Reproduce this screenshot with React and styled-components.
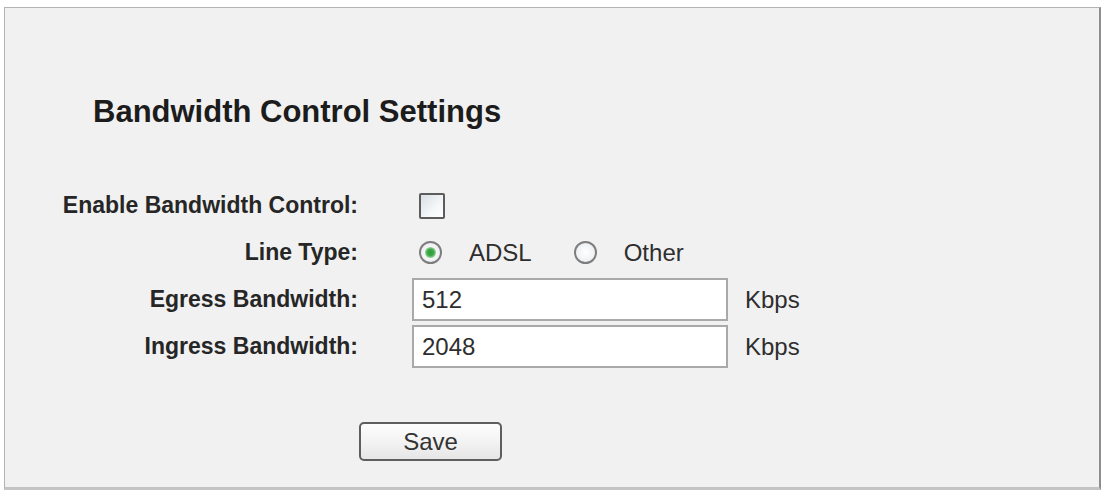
import React from "react";
import styled, { createGlobalStyle } from "styled-components";

const GlobalStyle = createGlobalStyle`
  html, body {
    margin: 0;
    padding: 0;
    background: #ffffff;
    font-family: "Liberation Sans", Arial, Helvetica, sans-serif;
  }
  * { box-sizing: border-box; }
`;

const Page = styled.div`
  padding: 7px 0 0 4px;
  height: 490px;
  overflow: hidden;
`;

const Panel = styled.div`
  width: 1097px;
  height: 483px;
  background: #f1f1f1;
  border-top: 1px solid #b3b3b3;
  border-left: 1px solid #b3b3b3;
  border-right: 2px solid #8e8e8e;
  border-bottom: 3px solid #c4c4c4;
  padding: 86px 0 0 0;
`;

const Title = styled.h1`
  margin: 0 0 0 88px;
  font-size: 31px;
  line-height: 36px;
  font-weight: bold;
  color: #1c1c1c;
`;

const Form = styled.div`
  margin-top: 52px;
  display: flex;
  flex-direction: column;
`;

const Row = styled.div`
  display: grid;
  grid-template-columns: 353px 1fr;
  column-gap: 54px;
  align-items: center;
  height: 47px;
`;

const Label = styled.div`
  text-align: right;
  font-size: 23px;
  font-weight: bold;
  color: #262626;
  white-space: nowrap;
`;

const Control = styled.div`
  display: flex;
  align-items: center;
`;

const Checkbox = styled.span`
  display: inline-block;
  width: 26px;
  height: 26px;
  margin-left: 7px;
  border: 2px solid #5c5c5c;
  border-radius: 2px;
  background: linear-gradient(135deg, #d9e0e6 0%, #f4f6f8 60%, #ffffff 100%);
`;

const Radio = styled.span`
  position: relative;
  display: inline-block;
  width: 23px;
  height: 23px;
  margin-left: ${(p) => p.$offset}px;
  border: 2px solid #7d7d7d;
  border-radius: 50%;
  background: radial-gradient(circle at 50% 50%, #ffffff 0%, #eef0f2 70%, #dcdfe2 100%);

  &::after {
    content: "";
    display: ${(p) => (p.$checked ? "block" : "none")};
    position: absolute;
    left: 50%;
    top: 50%;
    width: 11px;
    height: 11px;
    margin: -5.5px 0 0 -5.5px;
    border-radius: 50%;
    background: radial-gradient(circle, #2f9a3a 0%, #3da848 40%, #a9dcae 75%, #d8efda 100%);
  }
`;

const OptionText = styled.span`
  margin-left: 27px;
  font-size: 24px;
  color: #2e2e2e;
`;

const Input = styled.div`
  width: 316px;
  height: 43px;
  border: 2px solid #a9a9a9;
  background: #ffffff;
  padding-left: 8px;
  display: flex;
  align-items: center;
  font-size: 24px;
  color: #2e2e2e;
`;

const Unit = styled.span`
  margin-left: 17px;
  font-size: 24px;
  color: #2e2e2e;
`;

const ButtonRow = styled.div`
  margin-top: 52px;
  padding-left: 354px;
`;

const Button = styled.button`
  width: 143px;
  height: 39px;
  border: 2px solid #5e5e5e;
  border-radius: 5px;
  background: linear-gradient(180deg, #fdfdfd 0%, #f3f3f3 50%, #e6e6e6 100%);
  font-family: "Liberation Sans", Arial, sans-serif;
  font-size: 24px;
  color: #333333;
  padding: 0;
`;

export default function App() {
  return (
    <>
      <GlobalStyle />
      <Page>
        <Panel>
          <Title>Bandwidth Control Settings</Title>
          <Form>
            <Row>
              <Label>Enable Bandwidth Control:</Label>
              <Control>
                <Checkbox />
              </Control>
            </Row>
            <Row>
              <Label>Line Type:</Label>
              <Control>
                <Radio $checked $offset={7} />
                <OptionText>ADSL</OptionText>
                <Radio $offset={42} />
                <OptionText>Other</OptionText>
              </Control>
            </Row>
            <Row>
              <Label>Egress Bandwidth:</Label>
              <Control>
                <Input>512</Input>
                <Unit>Kbps</Unit>
              </Control>
            </Row>
            <Row>
              <Label>Ingress Bandwidth:</Label>
              <Control>
                <Input>2048</Input>
                <Unit>Kbps</Unit>
              </Control>
            </Row>
          </Form>
          <ButtonRow>
            <Button>Save</Button>
          </ButtonRow>
        </Panel>
      </Page>
    </>
  );
}
